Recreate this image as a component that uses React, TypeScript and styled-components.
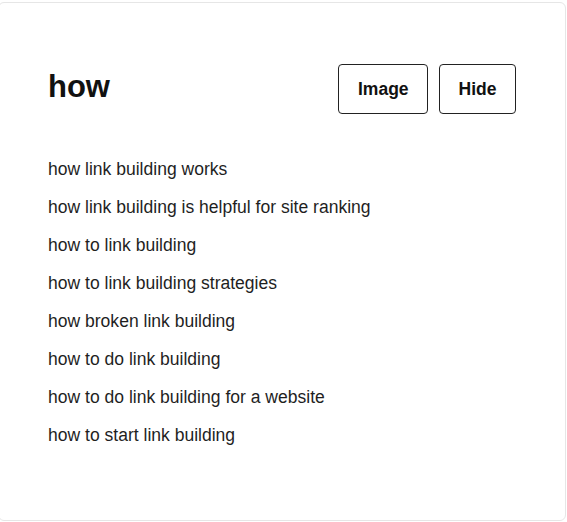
import React from 'react';
import styled, { createGlobalStyle } from 'styled-components';

const GlobalStyle = createGlobalStyle`
  html, body {
    margin: 0;
    padding: 0;
    background: #ffffff;
    overflow: hidden;
  }
  body {
    font-family: "Liberation Sans", Arial, sans-serif;
    color: #1a1a1a;
  }
`;

const Card = styled.div`
  box-sizing: border-box;
  width: 568px;
  height: 519px;
  margin: 2px 0 0 -2px;
  padding: 61px 49px 0 49px;
  background: #ffffff;
  border: 1px solid #e6e6e6;
  border-radius: 6px;
`;

const Header = styled.div`
  display: flex;
  align-items: center;
  justify-content: space-between;
`;

const Title = styled.h2`
  margin: 0;
  padding-bottom: 5px;
  font-size: 31px;
  line-height: 1.15;
  font-weight: 700;
  color: #111111;
`;

const Actions = styled.div`
  display: flex;
  gap: 11px;
`;

const Button = styled.button`
  box-sizing: border-box;
  height: 50px;
  padding: 0 18.5px;
  background: #ffffff;
  border: 1px solid #222222;
  border-radius: 4px;
  font-family: "Liberation Sans", Arial, sans-serif;
  font-size: 17.5px;
  font-weight: 700;
  color: #111111;
  cursor: pointer;
`;

const List = styled.ul`
  list-style: none;
  margin: 36px 0 0;
  padding: 0;
`;

const Item = styled.li`
  font-size: 17.55px;
  line-height: 38px;
  color: #1f1f1f;
`;

const suggestions = [
  'how link building works',
  'how link building is helpful for site ranking',
  'how to link building',
  'how to link building strategies',
  'how broken link building',
  'how to do link building',
  'how to do link building for a website',
  'how to start link building',
];

export default function App() {
  return (
    <>
      <GlobalStyle />
      <Card>
        <Header>
          <Title>how</Title>
          <Actions>
            <Button>Image</Button>
            <Button>Hide</Button>
          </Actions>
        </Header>
        <List>
          {suggestions.map(s => (
            <Item key={s}>{s}</Item>
          ))}
        </List>
      </Card>
    </>
  );
}
